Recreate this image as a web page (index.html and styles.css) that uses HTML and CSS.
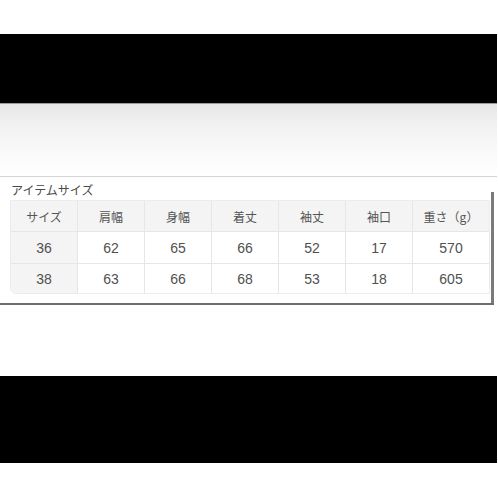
FILE: index.html
```html
<!DOCTYPE html>
<html lang="ja">
<head>
<meta charset="utf-8">
<link rel="stylesheet" href="styles.css">
</head>
<body>
<div class="page">
  <div class="gap-top"></div>
  <div class="band band-top"></div>
  <div class="fade"></div>
  <div class="sheet">
    <div class="sheet-main">
      <div class="caption">アイテムサイズ</div>
      <table class="sizes">
        <tr class="head">
          <th class="first">サイズ</th><th>肩幅</th><th>身幅</th><th>着丈</th><th>袖丈</th><th>袖口</th><th class="last">重さ（g）</th>
        </tr>
        <tr class="r1">
          <td class="first">36</td><td>62</td><td>65</td><td>66</td><td>52</td><td>17</td><td class="last">570</td>
        </tr>
        <tr class="r2">
          <td class="first">38</td><td>63</td><td>66</td><td>68</td><td>53</td><td>18</td><td class="last">605</td>
        </tr>
      </table>
    </div>
    <div class="sheet-edge"></div>
  </div>
  <div class="gap-mid"></div>
  <div class="band band-bottom"></div>
  <div class="gap-end"></div>
</div>
</body>
</html>
```
FILE: styles.css
```css
html, body {
  margin: 0;
  padding: 0;
  background: #ffffff;
}
.page {
  width: 498px;
  height: 498px;
  overflow: hidden;
  display: flex;
  flex-direction: column;
  font-family: "Liberation Sans", "Noto Sans CJK JP", sans-serif;
  color: #555;
}
.gap-top { height: 34px; flex: none; }
.band { background: #000; flex: none; width: 497px; }
.band-top { height: 69px; border-bottom: 1px solid #9a9a9a; }
.fade {
  flex: none;
  height: 72px;
  width: 497px;
  background: linear-gradient(#e6e6e6 0%, #f0f0f0 25%, #f8f8f8 60%, #ffffff 100%);
  border-bottom: 1px solid #d4d4d4;
}
.sheet {
  flex: none;
  display: flex;
  width: 494px;
  border-bottom: 2px solid #6e6e6e;
  height: 126px;
}
.sheet-main {
  flex: 1;
  padding: 5px 0 0 10px;
}
.caption {
  font-family: "Noto Sans CJK JP", sans-serif;
  font-size: 12px;
  line-height: 16px;
  color: #4a4a4a;
  padding-left: 1px;
  height: 18px;
}
.sheet-edge {
  flex: none;
  width: 3px;
  margin-top: 15px;
  background: #7a7a7a;
}
.sizes {
  border-collapse: separate;
  border-spacing: 0;
  border: 1px solid #ececec;
  border-radius: 0 0 0 6px;
  width: 479px;
  table-layout: fixed;
}
.sizes th, .sizes td {
  width: 66px;
  text-align: center;
  font-weight: normal;
  font-size: 14px;
  padding: 0;
  border-right: 1px solid #e6e6e6;
  border-bottom: 1px solid #e6e6e6;
}
.sizes th {
  font-family: "Noto Sans CJK JP", sans-serif;
  font-size: 12px;
  background: #f4f4f4;
  color: #555;
  height: 30px;
}
.sizes td { background: #fff; color: #505050; }
.sizes .r1 td { height: 31px; }
.sizes .r2 td { height: 29px; border-bottom: none; }
.sizes .first { background: #f4f4f4; }
.sizes .r2 .first { border-bottom-left-radius: 6px; }
.sizes .last { width: 76px; border-right: none; }
.gap-mid { flex: none; height: 71px; }
.band-bottom { height: 87px; }
.gap-end { flex: 1; }
```
